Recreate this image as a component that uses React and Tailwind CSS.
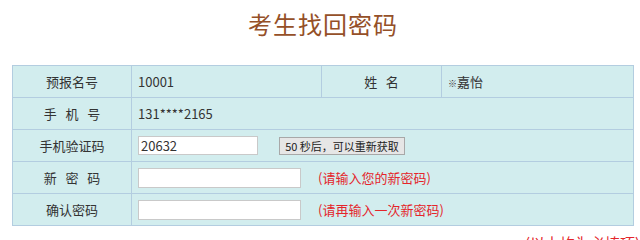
import React from 'react';

const cell = 'border border-[#b3cde0] h-[32px] text-[13px] text-[#333]';

export default function App() {
  return (
    <div className="w-[640px] h-[240px] overflow-hidden bg-white font-['Noto_Sans_CJK_SC',sans-serif]">
      <h1 className="text-center text-[24px] leading-[24px] pt-[12px] text-[#955028] tracking-[1px] pl-[6px]">
        考生找回密码
      </h1>

      <div className="pl-[12px] pt-[29px]">
        <table className="w-[621px] border-collapse bg-[#d2edee] table-fixed">
          <colgroup>
            <col className="w-[119px]" />
            <col className="w-[190px]" />
            <col className="w-[120px]" />
            <col className="w-[192px]" />
          </colgroup>
          <tbody>
            <tr>
              <td className={`${cell} text-center`}>预报名号</td>
              <td className={`${cell} pl-[6px]`}>10001</td>
              <td className={`${cell} text-center`}>姓&nbsp;&nbsp;&nbsp;名</td>
              <td className={`${cell} pl-[6px]`}>
                <span className="text-[9px]">※</span>嘉怡
              </td>
            </tr>
            <tr>
              <td className={`${cell} text-center`}>手&nbsp;&nbsp;&nbsp;机&nbsp;&nbsp;&nbsp;号</td>
              <td className={`${cell} pl-[6px]`} colSpan={3}>131****2165</td>
            </tr>
            <tr>
              <td className={`${cell} text-center`}>手机验证码</td>
              <td className={`${cell} pl-[6px]`} colSpan={3}>
                <div className="flex items-center">
                  <input
                    readOnly
                    value="20632"
                    className="w-[120px] h-[19px] bg-white border border-[#c9c9c9] px-[2px] text-[13px] text-[#333] outline-none"
                  />
                  <button className="ml-[21px] h-[18px] w-[126px] bg-[#e6e6e6] border border-[#a8a8a8] text-[11px] leading-[16px] text-[#222] whitespace-nowrap">
                    50 秒后，可以重新获取
                  </button>
                </div>
              </td>
            </tr>
            <tr>
              <td className={`${cell} text-center`}>新&nbsp;&nbsp;&nbsp;密&nbsp;&nbsp;&nbsp;码</td>
              <td className={`${cell} pl-[6px]`} colSpan={3}>
                <div className="flex items-center">
                  <input
                    type="password"
                    className="w-[163px] h-[20px] bg-white border border-[#c9c9c9] outline-none"
                  />
                  <span className="ml-[17px] text-[#e4252b]">(请输入您的新密码)</span>
                </div>
              </td>
            </tr>
            <tr>
              <td className={`${cell} text-center`}>确认密码</td>
              <td className={`${cell} pl-[6px]`} colSpan={3}>
                <div className="flex items-center">
                  <input
                    type="password"
                    className="w-[163px] h-[20px] bg-white border border-[#c9c9c9] outline-none"
                  />
                  <span className="ml-[17px] text-[#e4252b]">(请再输入一次新密码)</span>
                </div>
              </td>
            </tr>
          </tbody>
        </table>
      </div>

      <div className="pl-[525px] pt-[6px] text-[15px] text-[#e4252b] whitespace-nowrap">
        (以上均为必填项)
      </div>
    </div>
  );
}
